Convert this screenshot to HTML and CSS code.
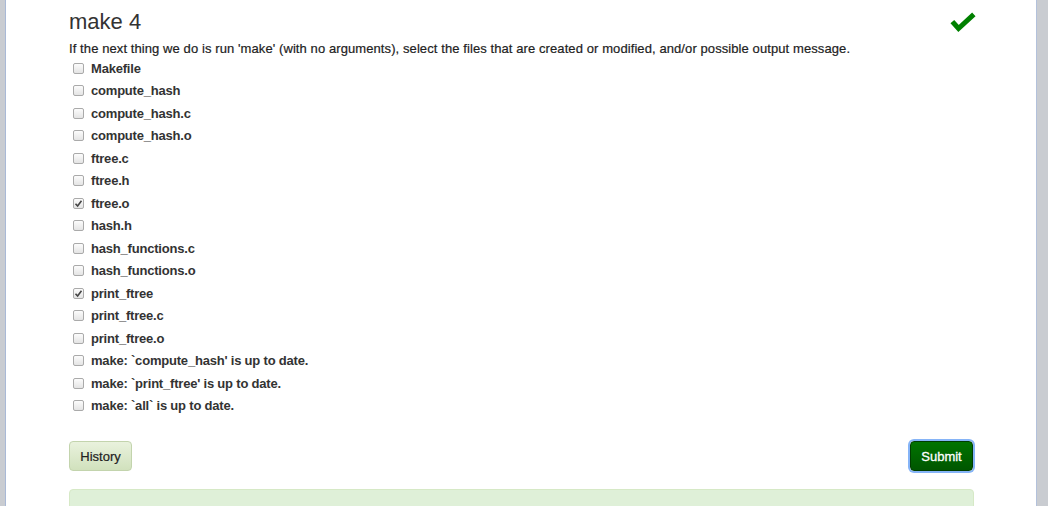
FILE: index.html
```html
<!DOCTYPE html>
<html>
<head>
<meta charset="utf-8">
<link rel="stylesheet" href="styles.css">
</head>
<body>
<div class="page">
  <div class="header">
    <h2 class="title">make 4</h2>
    <svg class="done" width="26" height="22" viewBox="0 0 26 22"><polyline points="4,11.5 8.5,16.5 22,4" fill="none" stroke="#008000" stroke-width="5" stroke-linecap="square"/></svg>
  </div>
  <p class="question">If the next thing we do is run 'make' (with no arguments), select the files that are created or modified, and/or possible output message.</p>
  <ul class="options">
    <li class="opt"><span class="box"></span><span class="lbl">Makefile</span></li>
    <li class="opt"><span class="box"></span><span class="lbl">compute_hash</span></li>
    <li class="opt"><span class="box"></span><span class="lbl">compute_hash.c</span></li>
    <li class="opt"><span class="box"></span><span class="lbl">compute_hash.o</span></li>
    <li class="opt"><span class="box"></span><span class="lbl">ftree.c</span></li>
    <li class="opt"><span class="box"></span><span class="lbl">ftree.h</span></li>
    <li class="opt"><span class="box checked"><svg width="9" height="9" viewBox="0 0 9 9"><polyline points="1.5,4.8 3.6,7 7.5,1.8" fill="none" stroke="#444" stroke-width="1.6"/></svg></span><span class="lbl">ftree.o</span></li>
    <li class="opt"><span class="box"></span><span class="lbl">hash.h</span></li>
    <li class="opt"><span class="box"></span><span class="lbl">hash_functions.c</span></li>
    <li class="opt"><span class="box"></span><span class="lbl">hash_functions.o</span></li>
    <li class="opt"><span class="box checked"><svg width="9" height="9" viewBox="0 0 9 9"><polyline points="1.5,4.8 3.6,7 7.5,1.8" fill="none" stroke="#444" stroke-width="1.6"/></svg></span><span class="lbl">print_ftree</span></li>
    <li class="opt"><span class="box"></span><span class="lbl">print_ftree.c</span></li>
    <li class="opt"><span class="box"></span><span class="lbl">print_ftree.o</span></li>
    <li class="opt"><span class="box"></span><span class="lbl">make: `compute_hash' is up to date.</span></li>
    <li class="opt"><span class="box"></span><span class="lbl">make: `print_ftree' is up to date.</span></li>
    <li class="opt"><span class="box"></span><span class="lbl">make: `all` is up to date.</span></li>
  </ul>
  <div class="actions">
    <button class="btn history">History</button>
    <button class="btn submit">Submit</button>
  </div>
  <div class="result"></div>
</div>
</body>
</html>
```
FILE: styles.css
```css
html, body {
  margin: 0;
  padding: 0;
  height: 100%;
  overflow: hidden;
}
body {
  background: #c9ccd1;
  font-family: "Liberation Sans", Arial, sans-serif;
  color: #333;
}
.page {
  margin: 0 11px 0 5px;
  height: 100%;
  background: #fff;
  border-left: 1px solid #a9b9d6;
  border-right: 1px solid #b3c1db;
  padding: 10px 62px 0 63px;
  box-sizing: border-box;
}
.header {
  display: flex;
  justify-content: space-between;
  align-items: flex-start;
}
.title {
  margin: 0;
  font-size: 22px;
  font-weight: normal;
  line-height: 24px;
  color: #333;
}
.done {
  margin-top: 2px;
  margin-right: -2px;
}
.question {
  margin: 7px 0 0;
  font-size: 13px;
  line-height: 16px;
  color: #222;
  letter-spacing: 0.09px;
  -webkit-text-stroke: 0.2px #222;
}
.options {
  list-style: none;
  margin: 0;
  padding: 0;
}
.opt {
  display: flex;
  align-items: center;
  height: 22.5px;
  padding-left: 4px;
}
.box {
  width: 9px;
  height: 9px;
  border: 1px solid #aaa;
  border-radius: 2px;
  background: linear-gradient(#fcfcfc, #e4e4e4);
  display: flex;
  align-items: center;
  justify-content: center;
  margin-right: 7px;
}
.lbl {
  font-size: 13px;
  font-weight: bold;
  color: #333;
  letter-spacing: -0.2px;
}
.actions {
  display: flex;
  justify-content: space-between;
  margin-top: 24px;
}
.btn {
  font-family: "Liberation Sans", Arial, sans-serif;
  font-size: 13px;
  height: 30px;
  border-radius: 4px;
  padding: 0;
}
.history {
  background: linear-gradient(#e9f2dd, #d1e1bd);
  border: 1px solid #c3d4ad;
  color: #222;
  width: 63px;
  -webkit-text-stroke: 0.2px #222;
}
.submit {
  background: linear-gradient(#007400, #005600);
  border: 1px solid #003d00;
  color: #fff;
  width: 63px;
  margin-right: 1px;
  box-shadow: 0 0 0 2px #86b4f7;
  -webkit-text-stroke: 0.3px #fff;
}
.result {
  margin-top: 18px;
  height: 40px;
  background: #dff0d8;
  border: 1px solid #d6e9c6;
  border-radius: 4px;
}
```
